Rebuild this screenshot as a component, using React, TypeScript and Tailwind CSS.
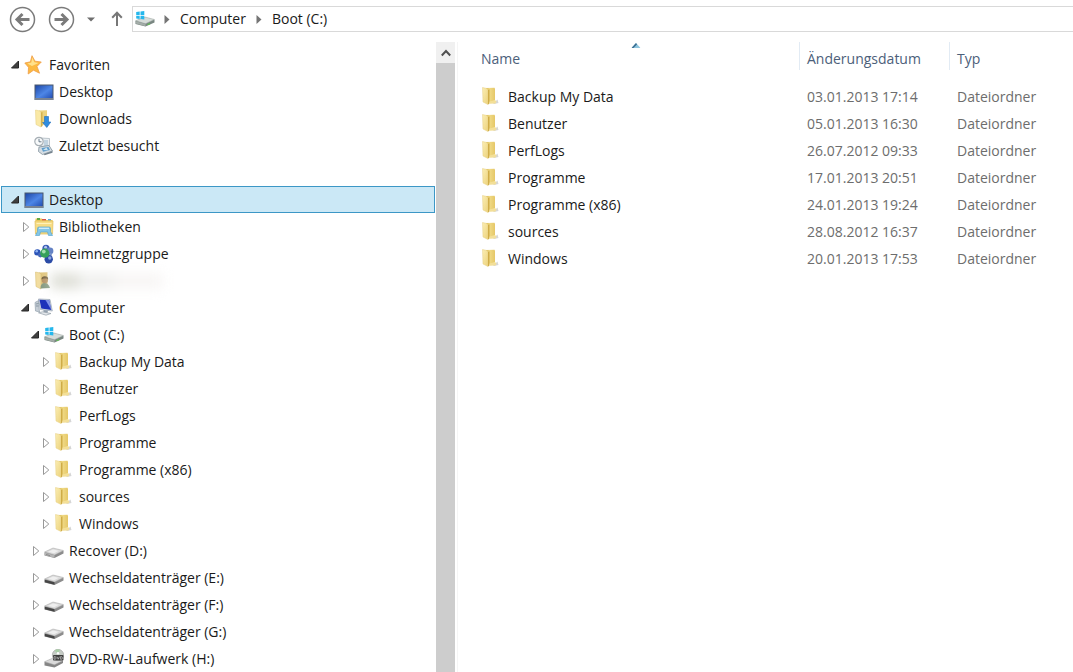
import { useState } from "react";
import type { ReactNode } from "react";

type TreeItem = {
  id: string;
  label: string;
  icon: ReactNode;
  hidden?: boolean;
  leaf?: boolean;
  open?: boolean;
  children?: TreeItem[];
};

function FolderIcon() {
  return (
    <svg className="w-5 h-5 shrink-0" viewBox="0 0 20 20" aria-hidden="true">
      <defs>
        <linearGradient id="folderFront" x1="0" y1="0" x2="1" y2="1">
          <stop offset="0" stopColor="#fbeeb4" />
          <stop offset="1" stopColor="#ecd27c" />
        </linearGradient>
        <linearGradient id="folderBack" x1="0" y1="0" x2="1" y2="0">
          <stop offset="0" stopColor="#d9b850" />
          <stop offset="0.4" stopColor="#f0da86" />
          <stop offset="1" stopColor="#e5c767" />
        </linearGradient>
      </defs>
      <path d="M12 16.5 16.5 12.5 17.5 16 13 17Z" fill="#b5b5b5" opacity="0.55" />
      <path d="M5 1 13.5 .8 14 2V13.5L7 16Z" fill="url(#folderBack)" />
      <path d="M1.5 .5 6 1.5 7 3V17.5L2 15Z" fill="url(#folderFront)" stroke="#e6cf82" strokeWidth="0.5" />
      <path d="M7 3 8.5 2.3V16.5L7 17.5Z" fill="#cfac47" />
      <path d="M8.5 14.5 14 13 15.5 14.5 14.5 16.5 8.5 16.8Z" fill="#f3df98" />
    </svg>
  );
}

function StarIcon() {
  return (
    <svg className="w-5 h-5 shrink-0" viewBox="0 0 20 20" aria-hidden="true">
      <path d="M8 .7 11 6.2 17.3 7 13 11.4 15.5 18.2 9.5 15.2 4.2 19 4.5 12.3 .8 8 6.4 6.8Z" fill="#fcb941" stroke="#ef9d48" strokeWidth="0.8" strokeLinejoin="round" />
      <path d="M8.3 2.5 10.4 7.2 14.5 8 8 11 3.2 8.5 7.3 7.6Z" fill="#ffe18c" />
    </svg>
  );
}

function DesktopIcon() {
  return (
    <svg className="w-5 h-5 shrink-0" viewBox="0 0 20 20" aria-hidden="true">
      <defs>
        <linearGradient id="desk" x1="0" y1="0" x2="1" y2="1">
          <stop offset="0" stopColor="#1f49a8" />
          <stop offset="0.55" stopColor="#4d86e6" />
          <stop offset="1" stopColor="#2450b4" />
        </linearGradient>
      </defs>
      <rect x="0.5" y="2.5" width="19" height="15.5" fill="#4b586c" />
      <rect x="1.5" y="3.5" width="17" height="12.5" fill="url(#desk)" />
      <path d="M1 17H19" stroke="#a8b0ba" />
    </svg>
  );
}

function DownloadsIcon() {
  return (
    <svg className="w-5 h-5 shrink-0" viewBox="0 0 20 20" aria-hidden="true">
      <path d="M5 1.5 13 1.3V14L7 17Z" fill="#ecd27c" />
      <path d="M1.5 1 6 2 7 3.5V18L2 15.5Z" fill="#fae9a6" stroke="#e3cb79" strokeWidth="0.5" />
      <path d="M7 3.5 8.5 3V17L7 18Z" fill="#d3b14d" />
      <path d="M10.5 7.5H14.5V13H16.8L12.8 18.5 8.6 13.5H10.5Z" fill="#2f8de0" stroke="#1c6cba" strokeWidth="0.6" />
    </svg>
  );
}

function RecentIcon() {
  return (
    <svg className="w-5 h-5 shrink-0" viewBox="0 0 20 20" aria-hidden="true">
      <path d="M7 2 15.5 2.5 15.5 11 7 12Z" fill="#e8edf1" stroke="#a3afb8" strokeWidth="0.7" />
      <path d="M10 5H14M10 7H14M10 9H14" stroke="#87a9c5" strokeWidth="0.8" />
      <path d="M5 11 15 9.5 18.5 15 8.5 18.5 4.5 15.5Z" fill="#d5dde3" stroke="#7f8f9b" strokeWidth="0.8" />
      <path d="M7.5 12 14.5 11 16 14 9 15.8Z" fill="#5f9dcb" />
      <path d="M9 14 12.5 11.5 14 14.3Z" fill="#cfe5f2" />
      <path d="M10 18 18.5 15V16.8L10.5 19.3Z" fill="#75838e" />
      <circle cx="5" cy="5.5" r="4.2" fill="#f8fafb" stroke="#a7afb5" strokeWidth="1.2" />
      <path d="M5 2.8V5.8H7.5" fill="none" stroke="#5d7081" strokeWidth="0.9" />
    </svg>
  );
}

function LibraryIcon() {
  return (
    <svg className="w-5 h-5 shrink-0" viewBox="0 0 20 20" aria-hidden="true">
      <path d="M1.5 3V1.5H8L9 3H18.5V5H1.5Z" fill="#ebc95e" />
      <path d="M3 1H6V3H3Z" fill="#63a846" />
      <path d="M8 2H12V3.5H8Z" fill="#d9534a" />
      <path d="M14 2H17V3.5H14Z" fill="#5ba9d8" />
      <path d="M1 4H19L18.5 17H1.5Z" fill="#f6dc84" stroke="#dfbd5a" strokeWidth="0.7" />
      <path d="M2.5 6.5H17.5" stroke="#fff1b8" />
      <path d="M3.5 11.5Q3.5 10 5 10H15Q16.5 10 16.5 11.5V14.5L18.5 18.5H14.5L13.5 15H6.5L5.5 18.5H1.5L3.5 14.5Z" fill="#83c6e8" stroke="#519fcb" strokeWidth="0.6" />
      <path d="M5 11.3H15" stroke="#d7f0fb" strokeWidth="1.2" />
    </svg>
  );
}

function HomegroupIcon() {
  return (
    <svg className="w-5 h-5 shrink-0" viewBox="0 0 20 20" aria-hidden="true">
      <circle cx="12" cy="4.4" r="3.6" fill="#3a5cb6" />
      <circle cx="16" cy="7" r="3.4" fill="#6482c4" />
      <circle cx="11.6" cy="3.2" r="1.5" fill="#b0c5ee" />
      <path d="M16.5 9V15" stroke="#7793c9" strokeWidth="2.5" />
      <circle cx="3.4" cy="8.4" r="3.2" fill="#2a53b8" />
      <circle cx="2.7" cy="7.3" r="1.3" fill="#8eb1f1" />
      <circle cx="6.4" cy="11" r="2.4" fill="#4668b8" />
      <circle cx="14.7" cy="15.2" r="4.2" fill="#2b4ba6" />
      <circle cx="15.8" cy="14" r="1.7" fill="#8ba6e0" />
      <circle cx="10.8" cy="9.2" r="4.6" fill="#36a05a" />
      <circle cx="9.8" cy="7.6" r="1.9" fill="#a3dfae" />
    </svg>
  );
}

function UserFolderIcon() {
  return (
    <svg className="w-5 h-5 shrink-0" viewBox="0 0 20 20" aria-hidden="true">
      <path d="M5 1.5 13.5 1.3V14.5L7 17Z" fill="#e2c780" />
      <path d="M1.5 1 6 2 7 3.5V18L2 15.5Z" fill="#f2dda0" stroke="#d4b968" strokeWidth="0.5" />
      <path d="M6.5 17.5Q6.5 12 10.5 12T16 17Z" fill="#869b82" />
      <circle cx="10.8" cy="9" r="3.2" fill="#b79263" />
      <path d="M7.5 8.5Q7.3 5.2 10.8 5.2T14.2 8.5L12.5 7.5H9.5Z" fill="#75613f" />
    </svg>
  );
}

function ComputerIcon() {
  return (
    <svg className="w-5 h-5 shrink-0" viewBox="0 0 20 20" aria-hidden="true">
      <path d="M1 4.5 4.5 2.5 5.5 14 1.5 13Z" fill="#c5cdd5" stroke="#8998a6" strokeWidth="0.6" />
      <path d="M2 6 4.5 5.5M2 8H4.5" stroke="#6f7f8c" strokeWidth="0.7" />
      <path d="M4.5 1 16 1.5 18.3 13 6.5 11.5Z" fill="#dce2ea" stroke="#8290a2" strokeWidth="0.6" />
      <path d="M5.5 1.8 15.3 2.2 17.3 12 7.3 10.6Z" fill="#1d31ba" />
      <path d="M11.5 2 15.3 2.2 17.2 11.8Z" fill="#8193e8" />
      <path d="M9.5 12 14 12.6 13.5 15 9.5 14.5Z" fill="#92a0ae" />
      <path d="M4.5 14.8 8.5 13.8 17 15.5 12 17.2Z" fill="#e4e8ec" stroke="#929da8" strokeWidth="0.7" />
    </svg>
  );
}

function DriveIcon({ dark = false }: { dark?: boolean }) {
  return (
    <svg className="w-5 h-5 shrink-0" viewBox="0 0 20 20" aria-hidden="true">
      <path d="M.5 11.5 9 7.5 19.5 10V12.5L10.5 17 .5 14.5Z" fill="#8c8c8c" />
      <path d="M.5 11 9 7 19.5 9.5 10.5 14Z" fill="#d9d9d9" stroke="#a8a8a8" strokeWidth="0.5" />
      <path d="M4 10.8 9 8.5 15 9.8 10 12.3Z" fill="#efefef" />
      <path d="M.8 11.8 10.5 14.3V16.8L.8 14.3Z" fill={dark ? "#464646" : "#b5b5b5"} />
      {!dark && <path d="M2 13.5 6 14.6" stroke="#7f7f7f" strokeWidth="0.8" />}
    </svg>
  );
}

function SystemDriveIcon() {
  return (
    <svg className="w-5 h-5 shrink-0" viewBox="0 0 20 20" aria-hidden="true">
      <path d="M.5 12 10 8.5 19.5 11V13.5L10.5 17.5 .5 15Z" fill="#798681" />
      <path d="M.5 11.8 10 8 19.5 10.5 10.5 14.7Z" fill="#d6dcd9" stroke="#98a39f" strokeWidth="0.5" />
      <path d="M.8 12.3 10.5 15V17.2L.8 14.6Z" fill="#a3aca8" />
      <path d="M12.5 15.8 15 14.6" stroke="#5ebf51" strokeWidth="1.2" />
      <path d="M1.2 3 4.7 2.6V6H1.2ZM5.5 2.5 9.3 2V6H5.5ZM1.2 6.8H4.7V10L1.2 9.6ZM5.5 6.8H9.3V10.5L5.5 10.1Z" fill="#25b7ec" />
    </svg>
  );
}

function DvdIcon() {
  return (
    <svg className="w-5 h-5 shrink-0" viewBox="0 0 20 20" aria-hidden="true">
      <path d="M.5 13 9 9.5 19 12V14L10.5 18.5 .5 16.5Z" fill="#858585" />
      <path d="M.5 12.7 9 9 19 11.5 10.5 15.8Z" fill="#dadada" stroke="#a8a8a8" strokeWidth="0.5" />
      <circle cx="14" cy="6" r="5.7" fill="#c6ccc6" stroke="#939393" strokeWidth="0.5" />
      <path d="M14 5 10.5 1.6Q13.5-.4 16 .8Z" fill="#a9cfa7" />
      <circle cx="14" cy="4.2" r="1.2" fill="#fff" />
      <rect x="9" y="6" width="10.5" height="5.6" rx="0.8" fill="#3e3e3e" />
      <path d="M10 7.7V10.2H11.5L12.2 9 11.5 7.7ZM13 7.7 14.2 10.2 15.4 7.7M16.4 7.7V10.2H17.8L18.5 9 17.8 7.7Z" fill="none" stroke="#dedede" strokeWidth="0.6" />
    </svg>
  );
}

const folders = [
  { name: "Backup My Data", date: "03.01.2013 17:14" },
  { name: "Benutzer", date: "05.01.2013 16:30" },
  { name: "PerfLogs", date: "26.07.2012 09:33" },
  { name: "Programme", date: "17.01.2013 20:51" },
  { name: "Programme (x86)", date: "24.01.2013 19:24" },
  { name: "sources", date: "28.08.2012 16:37" },
  { name: "Windows", date: "20.01.2013 17:53" },
];

const favorites: TreeItem = {
  id: "favorites",
  label: "Favoriten",
  icon: <StarIcon />,
  open: true,
  children: [
    { id: "fav-desktop", label: "Desktop", icon: <DesktopIcon />, leaf: true },
    { id: "fav-downloads", label: "Downloads", icon: <DownloadsIcon />, leaf: true },
    { id: "fav-recent", label: "Zuletzt besucht", icon: <RecentIcon />, leaf: true },
  ],
};

const desktop: TreeItem = {
  id: "desktop",
  label: "Desktop",
  icon: <DesktopIcon />,
  open: true,
  children: [
    { id: "libraries", label: "Bibliotheken", icon: <LibraryIcon /> },
    { id: "homegroup", label: "Heimnetzgruppe", icon: <HomegroupIcon /> },
    { id: "user", label: "", icon: <UserFolderIcon />, hidden: true },
    {
      id: "computer",
      label: "Computer",
      icon: <ComputerIcon />,
      open: true,
      children: [
        {
          id: "c",
          label: "Boot (C:)",
          icon: <SystemDriveIcon />,
          open: true,
          children: folders.map((f) => ({
            id: "c-" + f.name,
            label: f.name,
            icon: <FolderIcon />,
            leaf: f.name === "PerfLogs",
          })),
        },
        { id: "d", label: "Recover (D:)", icon: <DriveIcon /> },
        { id: "e", label: "Wechseldatenträger (E:)", icon: <DriveIcon dark /> },
        { id: "f", label: "Wechseldatenträger (F:)", icon: <DriveIcon dark /> },
        { id: "g", label: "Wechseldatenträger (G:)", icon: <DriveIcon dark /> },
        { id: "h", label: "DVD-RW-Laufwerk (H:)", icon: <DvdIcon /> },
      ],
    },
  ],
};

function TreeNode({ item, selected, onSelect }: { item: TreeItem; selected: string; onSelect: (id: string) => void }) {
  const [open, setOpen] = useState(!!item.open);

  return (
    <li>
      <div className={`flex items-center h-[27px] border ${selected === item.id ? "bg-[#cbe8f6] border-[#3c97c6]" : "border-transparent"}`}>
        {item.leaf ? (
          <span className="w-[22px] shrink-0" />
        ) : (
          <button
            className="w-[22px] h-5 pl-2 shrink-0 flex items-center"
            aria-label={open ? "Reduzieren" : "Erweitern"}
            aria-expanded={open}
            onClick={() => setOpen(!open)}
          >
            <svg className="w-[10px] h-[11px]" viewBox="0 0 10 11" aria-hidden="true">
              {open ? (
                <path d="M8.5 2V9H1.5Z" fill="#404040" stroke="#262626" />
              ) : (
                <path d="M3.5 1.5 8.8 6 3.5 10.5Z" fill="#fff" stroke="#989898" />
              )}
            </svg>
          </button>
        )}
        <button className="flex items-center gap-[5px] whitespace-nowrap" onClick={() => onSelect(item.id)} aria-label={item.hidden ? "Benutzer" : undefined}>
          {item.icon}
          {item.hidden ? (
            <span className="flex w-[112px] h-4 -ml-2 blur-[6px]">
              <span className="w-7 bg-[#dfe0d8]" />
              <span className="w-9 bg-[#f0f0ee]" />
              <span className="flex-1 bg-[#f8f6f5]" />
            </span>
          ) : (
            item.label
          )}
        </button>
      </div>
      {open && item.children && (
        <ul className="pl-[10px]">
          {item.children.map((child) => (
            <TreeNode key={child.id} item={child} selected={selected} onSelect={onSelect} />
          ))}
        </ul>
      )}
    </li>
  );
}

function RoundArrow({ label, flip = false }: { label: string; flip?: boolean }) {
  return (
    <button aria-label={label}>
      <svg className={`w-[27px] h-[27px] ${flip ? "-scale-x-100" : ""}`} viewBox="0 0 27 27" fill="none" stroke="#7b7b7b">
        <circle cx="13.5" cy="13.5" r="12" strokeWidth="1.5" />
        <path d="M20.5 13.5H8.5" strokeWidth="3" />
        <path d="M13.5 8 8 13.5 13.5 19" strokeWidth="3" />
      </svg>
    </button>
  );
}

function Crumb() {
  return (
    <svg className="w-[6px] h-[9px] shrink-0" viewBox="0 0 6 9" aria-hidden="true">
      <path d="M.5 0 5.5 4.5 .5 9Z" fill="#757575" />
    </svg>
  );
}

export default function App() {
  const [selected, setSelected] = useState("desktop");

  return (
    <div className="min-h-screen flex flex-col bg-white text-[#1a1a1a] font-['Open_Sans','Noto_Sans',sans-serif] text-[14px] leading-5 overflow-hidden">
      {/* Navigation bar */}
      <header className="flex items-center h-[38px] pl-[9px]">
        <RoundArrow label="Zurück" />
        <div className="pl-3 flex">
          <RoundArrow label="Vorwärts" flip />
        </div>
        <button className="w-[31px] h-6 flex items-center justify-center" aria-label="Letzte Orte">
          <svg className="w-2 h-[5px]" viewBox="0 0 8 5">
            <path d="M0 .5H8L4 4.5Z" fill="#6e6e6e" />
          </svg>
        </button>
        <button className="w-[22px] mr-1 h-6 flex items-center justify-center" aria-label="Nach oben">
          <svg className="w-3 h-4" viewBox="0 0 12 16" fill="none" stroke="#777" strokeWidth="2">
            <path d="M6 15V2M1.2 6.8 6 1.8 10.8 6.8" />
          </svg>
        </button>
        <nav className="flex-1 flex items-center h-[26px] border border-r-0 border-[#d9d9d9] pl-[2px]" aria-label="Adresse">
          <SystemDriveIcon />
          <div className="flex items-center gap-[10px] pl-[9px]">
            <Crumb />
            <a href="#computer">Computer</a>
            <Crumb />
            <a href="#boot">Boot (C:)</a>
          </div>
        </nav>
      </header>

      <div className="flex flex-1 pt-1">
        {/* Folder tree */}
        <aside className="w-[436px] shrink-0 pt-[9px] pl-px pr-px">
          <ul>
            <TreeNode item={favorites} selected={selected} onSelect={setSelected} />
          </ul>
          <ul className="pt-[27px]">
            <TreeNode item={desktop} selected={selected} onSelect={setSelected} />
          </ul>
        </aside>

        <div className="w-[19px] shrink-0 flex flex-col bg-[#cdcdcd]">
          <button className="h-[21px] bg-[#f0f0f0] flex items-center justify-center" aria-label="Nach oben scrollen">
            <svg className="w-[10px] h-2" viewBox="0 0 10 8" fill="none" stroke="#505050" strokeWidth="2">
              <path d="M.8 6.5 5 2 9.2 6.5" />
            </svg>
          </button>
        </div>

        {/* File list */}
        <main className="flex-1 min-w-0 ml-[2px] border-l border-[#f5f5f5] pl-[14px]">
          <table className="w-full table-fixed text-left whitespace-nowrap">
            <colgroup>
              <col className="w-[327px]" />
              <col className="w-[150px]" />
              <col />
            </colgroup>
            <thead className="text-[#4c607a]">
              <tr className="h-[41px] align-top">
                <th className="relative font-normal pl-[9px] pt-[7px]" aria-sort="ascending">
                  <svg className="absolute top-px left-1/2 -translate-x-1/2 w-[9px] h-[5px]" viewBox="0 0 9 5" aria-hidden="true">
                    <path d="M4.5 0 9 5H0Z" fill="#8ec5de" />
                    <path d="M4.5 0 0 5H2L5.5 1.5Z" fill="#3c6f92" />
                  </svg>
                  Name
                </th>
                <th className="font-normal p-0">
                  <div className="border-l border-[#e2ebf4] h-[28px] pt-[7px] pl-[7px]">Änderungsdatum</div>
                </th>
                <th className="font-normal p-0">
                  <div className="border-l border-[#e2ebf4] h-[28px] pt-[7px] pl-[7px]">Typ</div>
                </th>
              </tr>
            </thead>
            <tbody className="text-[#6d6d6d]">
              {folders.map((folder) => (
                <tr key={folder.name} className="h-[27px]">
                  <td className="p-0 pl-[9px] text-[#1a1a1a]">
                    <div className="flex items-center gap-[7px]">
                      <FolderIcon />
                      {folder.name}
                    </div>
                  </td>
                  <td className="p-0 pl-2">{folder.date}</td>
                  <td className="p-0 pl-2">Dateiordner</td>
                </tr>
              ))}
            </tbody>
          </table>
        </main>
      </div>
    </div>
  );
}
